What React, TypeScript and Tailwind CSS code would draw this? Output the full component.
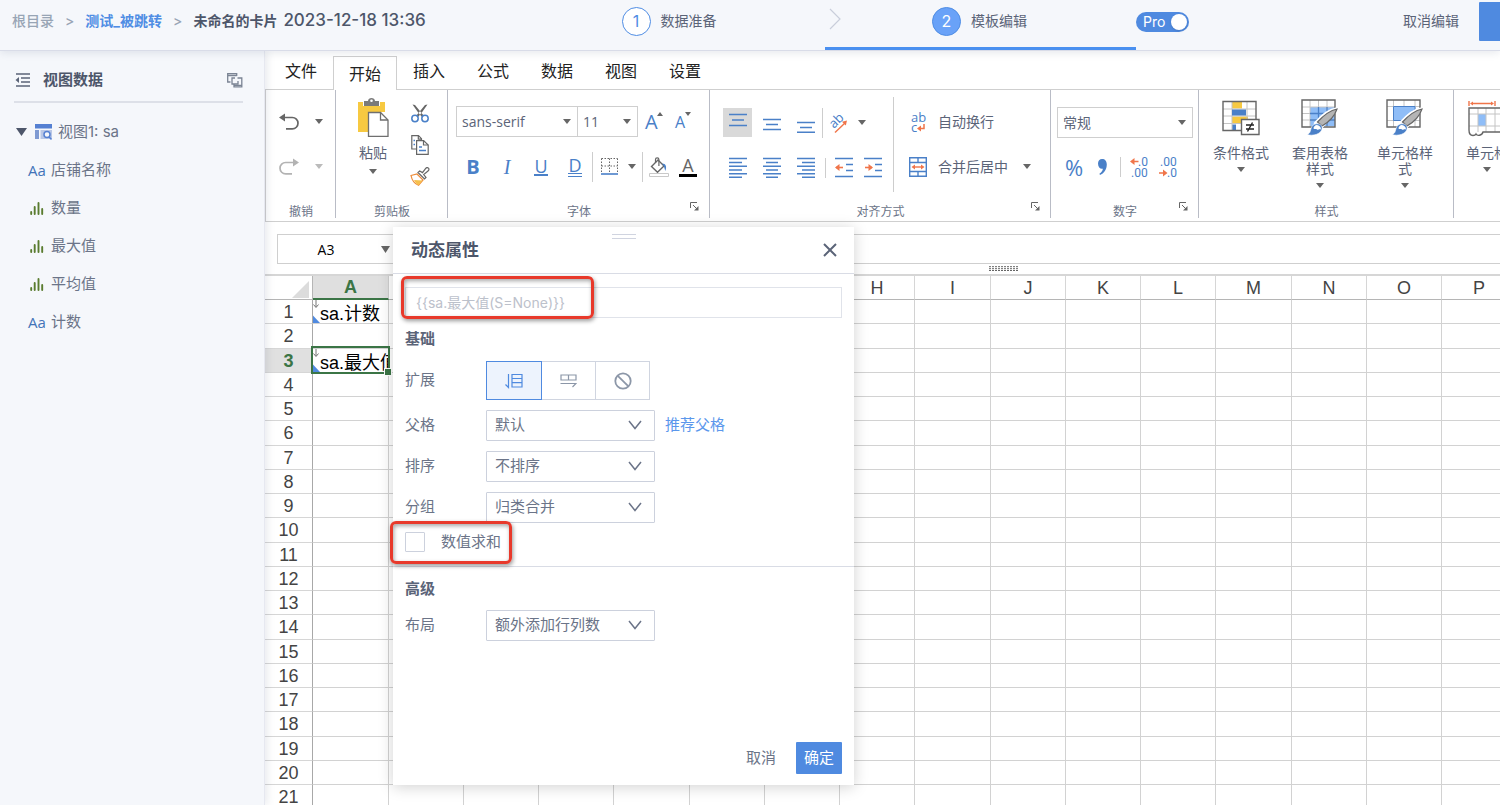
import { useState } from "react";
import type { ReactNode } from "react";

const BLUE = "#4a80c8";
const ORANGE = "#f0754a";
const GRAY = "#666666";

const fields = [
  { kind: "text", name: "店铺名称" },
  { kind: "number", name: "数量" },
  { kind: "number", name: "最大值" },
  { kind: "number", name: "平均值" },
  { kind: "text", name: "计数" },
];

const tabs = ["文件", "开始", "插入", "公式", "数据", "视图", "设置"];
const columns = "ABCDEFGHIJKLMNOP".split("");
const rows = Array.from({ length: 21 }, (_, i) => i + 1);

/* ---------- small shared pieces ---------- */

function Caret({ light = false }: { light?: boolean }) {
  return (
    <svg width="8" height="5" viewBox="0 0 8 5" className="shrink-0">
      <path d="M0 0h8L4 5z" fill={light ? "#bbbbbb" : GRAY} />
    </svg>
  );
}

function Launcher() {
  return (
    <button type="button" aria-label="更多设置" className="absolute right-[11px] bottom-2.5">
      <svg width="9" height="9" viewBox="0 0 9 9" fill="none" stroke={GRAY}>
        <path d="M.5 6V.5H7" />
        <path d="M3 3l4 4" />
        <path d="M8.5 4v4.5H4z" fill={GRAY} stroke="none" />
      </svg>
    </button>
  );
}

function Group({ label, className, launcher, children }: { label: string; className: string; launcher?: boolean; children: ReactNode }) {
  return (
    <section className={`relative flex shrink-0 flex-col ${className}`}>
      {children}
      <div className="mt-auto h-[19px] text-center text-xs leading-5 text-[#6b7488]">{label}</div>
      {launcher && <Launcher />}
      <span className="absolute top-0 right-0 h-32 w-px bg-[#b9bcc6]" />
    </section>
  );
}

function RibbonSelect({ label, value, className }: { label: string; value: string; className: string }) {
  return (
    <div className={`relative h-[31px] shrink-0 ${className}`}>
      <select
        aria-label={label}
        className="h-full w-full appearance-none border border-[#cfcfcf] bg-white pl-[5px] font-['Open_Sans','Noto_Sans_CJK_SC',sans-serif] text-sm text-[#5b6478] outline-none"
      >
        <option>{value}</option>
      </select>
      <span className="pointer-events-none absolute top-[13px] right-[7px]">
        <Caret />
      </span>
    </div>
  );
}

function Sep() {
  return <span className="h-[30px] w-px shrink-0 bg-[#cdcdcd]" />;
}

/* ---------- ribbon icons ---------- */

function UndoIcon({ color }: { color: string }) {
  return (
    <svg width="20" height="17" viewBox="0 0 20 17" fill="none" stroke={color} strokeWidth="1.7">
      <path d="M4 4.5h9.3a5.7 5.7 0 0 1 0 11.4H7" />
      <path d="M0 4.5L6 .5v8z" fill={color} stroke="none" />
    </svg>
  );
}

function PasteIcon() {
  return (
    <svg width="31" height="39" viewBox="0 0 31 39">
      <path d="M0 4h27v10H10v20H0z" fill="#f7c941" />
      <path d="M5 4h17v4H5z" fill="#fff" />
      <path d="M6 3h4c0-4 7-4 7 0h4v5H6z" fill="#7b7b7b" />
      <circle cx="13.5" cy="2.8" r="1.3" fill="#fff" />
      <path d="M10.5 14.5h12l7.5 7.5v16.5H10.500z" fill="#fff" stroke="#6f6f6f" strokeWidth="1.3" />
      <path d="M22.5 14.5V22H30" fill="none" stroke="#6f6f6f" strokeWidth="1.3" />
    </svg>
  );
}

function CutIcon() {
  return (
    <svg width="18" height="19" viewBox="0 0 18 19" fill="none">
      <path d="M1.500.5l2.500.5 9 11-2 1L7.500 9zM16.500.5L14 1 5 12l2 1 3.500-4z" fill={GRAY} />
      <circle cx="4" cy="14.5" r="3.2" stroke={BLUE} strokeWidth="1.5" />
      <circle cx="14" cy="14.5" r="3.2" stroke={BLUE} strokeWidth="1.5" />
    </svg>
  );
}

function CopyIcon() {
  return (
    <svg width="18" height="20" viewBox="0 0 18 20" fill="none" stroke={GRAY} strokeWidth="1.2">
      <path d="M5 14H.8V.7h6.700l3 3V5M7.300.7v3.500H10" />
      <path d="M5.600 5.600h7L17.200 10v9.300H5.600z" fill="#fff" />
      <path d="M12.500 5.600V10h4.700" />
      <path d="M2.500 5.500h1.500M2.500 9.500h1.500M8 12h3M8 15.500h7" stroke={BLUE} strokeWidth="1.4" />
    </svg>
  );
}

function FormatBrushIcon() {
  return (
    <svg width="20" height="19" viewBox="0 0 20 19" fill="none">
      <path d="M1 8.500l6-1.500 6 6-4.500 5.300C5 17 2 13.500 1 8.500z" fill="#fff" stroke="#ed8b39" strokeWidth="1.2" />
      <path d="M4 13l8.500.5-4 4.800C7 17.500 5 15.500 4 13z" fill="#f6c04c" />
      <path d="M8 5.500l6.500 6.500 1.500-1.500-2.300-3L18 4c1.500-1.200 1-2.500.3-3-.8-.6-1.800-.5-2.600.4L12.500 5.600 9.700 4z" fill="#fff" stroke={GRAY} strokeWidth="1.2" />
    </svg>
  );
}

function LetterIcon({ small = false }: { small?: boolean }) {
  return (
    <span className="relative flex h-5 w-5 items-end font-['Open_Sans',sans-serif] text-[#4a80c8]">
      <span className={small ? "text-base leading-5" : "text-xl leading-5"}>A</span>
      <svg width="6" height="4" viewBox="0 0 6 4" className={small ? "absolute top-0 right-1" : "absolute top-0 right-0.5"}>
        <path d={small ? "M0 0h6L3 4z" : "M0 4h6L3 0z"} fill={GRAY} />
      </svg>
    </span>
  );
}

function BorderIcon() {
  return (
    <svg width="17" height="17" viewBox="0 0 17 17" fill="none">
      <path d="M.5.5h16M.5 8h16M.5.5v14M8.500.5v14M16.500.5v14" stroke={GRAY} strokeDasharray="1.5 1.5" />
      <path d="M0 16h17" stroke={BLUE} strokeWidth="1.6" />
    </svg>
  );
}

function FillIcon() {
  return (
    <svg width="20" height="20" viewBox="0 0 20 20" fill="none">
      <path d="M2.500 9.500L9 3l6 6-6.500 6.300z" fill="#fff" stroke={GRAY} strokeWidth="1.4" />
      <path d="M6.500 6V2.500a1.700 1.700 0 0 1 3.400 0V9" stroke={GRAY} strokeWidth="1.2" />
      <path d="M13 6.500c4 0 5 3.500 3.300 7.500L14.800 9z" fill={BLUE} />
      <path d="M.5 16.500h19v3H.5z" fill="#fff" stroke="#c9c9c9" />
    </svg>
  );
}

function LinesIcon({ d }: { d: string }) {
  return (
    <svg width="18" height="21" viewBox="0 0 18 21" fill="none" stroke={BLUE} strokeWidth="1.4">
      <path d={d} />
    </svg>
  );
}

function IndentIcon({ right = false }: { right?: boolean }) {
  return (
    <svg width="18" height="21" viewBox="0 0 18 21" fill="none">
      <path d="M0 1.500h18M11 7.500h7M11 13.500h7M0 19.500h18" stroke={BLUE} strokeWidth="1.4" />
      <path d="M1 10.500h7" stroke={ORANGE} strokeWidth="1.6" />
      <path d={right ? "M9 10.500L4.500 7v7z" : "M0 10.500L4.500 7v7z"} fill={ORANGE} />
    </svg>
  );
}

function RotateTextIcon() {
  return (
    <svg width="19" height="20" viewBox="0 0 19 20" fill="none" className="overflow-visible">
      <text x="5" y="16" transform="rotate(-45 5 16)" fontFamily="Open Sans" fontSize="13" fill={BLUE}>
        ab
      </text>
      <path d="M6 19.500L16 10" stroke={ORANGE} strokeWidth="1.4" />
      <path d="M18 7.500l-5 1.300 3.800 3.700z" fill={ORANGE} />
    </svg>
  );
}

function WrapIcon() {
  return (
    <span className="relative flex w-[18px] flex-col pl-0.5 text-left font-['Open_Sans',sans-serif] text-[13px] leading-[10px] text-[#4a80c8]">
      <span>ab</span>
      <span>c</span>
      <svg width="8" height="8" viewBox="0 0 8 8" fill="none" className="absolute right-0.5 bottom-0">
        <path d="M7 0v4.500H3" stroke={ORANGE} strokeWidth="1.5" />
        <path d="M0 4.500l4-3v6z" fill={ORANGE} />
      </svg>
    </span>
  );
}

function MergeIcon() {
  return (
    <svg width="18" height="20" viewBox="0 0 18 20" fill="none">
      <path d="M.7.7h16.600v18.600H.7zM.7 5.500h16.600M.7 14.500h16.600M9 .7v4.800M9 14.500v4.800" stroke={BLUE} strokeWidth="1.4" />
      <path d="M5 10h8" stroke={ORANGE} strokeWidth="1.4" />
      <path d="M2.500 10L6 7.500v5zM15.500 10L12 7.500v5z" fill={ORANGE} />
    </svg>
  );
}

function DecimalIcon({ less = false }: { less?: boolean }) {
  return (
    <svg width="20" height="21" viewBox="0 0 20 21" fontFamily="Roboto" fontSize="12" fill={BLUE} className="overflow-visible">
      {less ? (
        <>
          <text x="1" y="9">.00</text>
          <text x="8" y="20">.0</text>
          <path d="M0 15.300h4V12.500l4.500 3.500L4 19.500v-2.700H0z" fill={ORANGE} />
        </>
      ) : (
        <>
          <text x="8" y="9">.0</text>
          <text x="1" y="20">.00</text>
          <path d="M8.500 3.700H4.500V1L0 4.500 4.500 8V5.200h4z" fill={ORANGE} />
        </>
      )}
    </svg>
  );
}

function BrushOverlay() {
  return (
    <>
      <path d="M36 10l-16 18-5-4C21 17 29 11 36 10z" fill="#b5b5b5" stroke="#fff" strokeWidth="3.500" />
      <path d="M36 10c-2 6-8 13-15 17l-4.500-4C22 17 29 11.500 36 10z" fill="#b5b5b5" stroke={GRAY} strokeWidth="1.2" />
      <path d="M14.500 25c4-1 7.500 1.500 6.500 5-1 5-9 7.500-15 5.500 4-1.500 3-4 4.500-7 .6-2 2-3 4-3.500z" fill={BLUE} stroke="#fff" strokeWidth=".6" />
      <path d="M15 26c3 0 5 1.500 5 4.500-2-1-3 1-4 0s-2.500 0-3.500-1c0-1.500 1-2.500 2.500-3.500z" fill="#fff" />
    </>
  );
}

function ConditionalIcon() {
  return (
    <svg width="38" height="38" viewBox="0 0 38 38" fill="none">
      <path d="M1 2.500h33v29H1z" fill="#fff" />
      <path d="M10 2.500h10v7H10zM10 17.500h16v7H10z" fill="#f7c941" />
      <path d="M10 25.500h4v6h-4z" fill={BLUE} />
      <path d="M1 10h33M1 17h33M1 24.500h33M10 2v29.500M25 2v29.500" stroke="#c4c4c4" />
      <path d="M1 2.500h33v29H1z" stroke={GRAY} strokeWidth="1.4" />
      <path d="M10 10.500h14v6H10z" fill={BLUE} />
      <path d="M19.500 20.500H37v15H19.500z" fill="#fff" stroke={GRAY} strokeWidth="1.4" />
      <path d="M24 26h8M24 30h8M30.500 23.500l-5 9" stroke="#222" strokeWidth="1.4" />
    </svg>
  );
}

function TableStyleIcon() {
  return (
    <svg width="38" height="38" viewBox="0 0 38 38" fill="none">
      <path d="M9 8h25v19H9z" fill="#8fbdf7" />
      <path d="M9 1v27M17.500 1v27M26 1v27M1 8h33M1 14.500h33M1 21h33" stroke="#c4c4c4" />
      <path d="M17.500 8v19M26 8v19M9 14.500h25M9 21h25" stroke={BLUE} strokeWidth="1.3" />
      <path d="M1 1h33v27H1z" stroke={GRAY} strokeWidth="1.4" />
      <BrushOverlay />
    </svg>
  );
}

function CellStyleIcon() {
  return (
    <svg width="38" height="38" viewBox="0 0 38 38" fill="none">
      <path d="M7.500 1v27M29 1v27M18 1v27M1 7.500h33M1 21.500h33" stroke="#c4c4c4" />
      <path d="M7.500 7.500H29v14H7.500z" fill="#8fbdf7" stroke={BLUE} />
      <path d="M1 1h33v27H1z" stroke={GRAY} strokeWidth="1.4" />
      <BrushOverlay />
    </svg>
  );
}

function CellSizeIcon() {
  return (
    <svg width="38" height="38" viewBox="0 0 38 38" fill="none">
      <path d="M1 2v5M27 2v5M4 4.500h20" stroke={ORANGE} strokeWidth="1.4" />
      <path d="M2 4.500l3-2v4zM26 4.500l-3-2v4z" fill={ORANGE} />
      <path d="M10 15h8v12h-8z" fill="#8fbdf7" />
      <path d="M10 9v24M18 9v24M27 9v24M1 15h36M1 27h36" stroke="#c4c4c4" />
      <path d="M37 9H1v22c0 4 2 5.500 4 5.500 1.500 0 2.500-.5 3-1.500 1 2 6 2 7-2h22" stroke={GRAY} strokeWidth="1.4" />
    </svg>
  );
}

function BigButton({ icon, lines, className }: { icon: ReactNode; lines: string[]; className: string }) {
  return (
    <button type="button" className={`flex shrink-0 flex-col items-center pt-[9px] ${className}`}>
      {icon}
      <span className="mt-2 flex flex-col text-sm leading-4 whitespace-nowrap text-[#5b6478]">
        {lines.map((line) => (
          <span key={line}>{line}</span>
        ))}
      </span>
      <span className="mt-1.5">
        <Caret />
      </span>
    </button>
  );
}

/* ---------- page sections ---------- */

function TopBar() {
  const [pro, setPro] = useState(true);

  return (
    <header className="relative z-20 flex h-[51px] shrink-0 border-b border-[#d9dce8] bg-[#f5f7fb] text-sm text-[#5b6478] shadow-[0_2px_8px_rgba(60,70,110,0.12)]">
      <nav className="flex h-[41px] w-[515px] shrink-0 items-center gap-[11px] pl-3 font-medium whitespace-nowrap">
        <a href="#root" className="text-[#98a5b5]">根目录</a>
        <span className="text-[#98a5b5]">&gt;</span>
        <a href="#parent" className="font-bold text-[#4f8de4]">测试_被跳转</a>
        <span className="text-[#98a5b5]">&gt;</span>
        <span className="flex items-center gap-1.5 font-bold text-[#4d566a]">
          <span>未命名的卡片</span>
          <span className="text-[17px] font-medium">2023-12-18 13:36</span>
        </span>
      </nav>
      <div className="flex h-[50px] w-[310px] shrink-0 items-center justify-center gap-2.5 pr-0.5 pb-2">
        <span className="flex h-[29px] w-[29px] items-center justify-center rounded-full border border-[#4f8de4] bg-white text-base text-[#4f8de4]">1</span>
        <span>数据准备</span>
      </div>
      <div className="relative flex h-[50px] w-[311px] shrink-0 items-center justify-center gap-2.5 border-b-3 border-[#4a90f0] pr-0.5 pb-[5px]">
        <svg width="12" height="22" viewBox="0 0 12 22" fill="none" className="absolute top-2 left-1">
          <path d="M1 1l10 10L1 21" stroke="#c9cedb" strokeWidth="1.2" />
        </svg>
        <span className="flex h-[29px] w-[29px] items-center justify-center rounded-full border border-[#4f8de4] bg-[#69a2f8] text-base text-white">2</span>
        <span>模板编辑</span>
      </div>
      <button
        type="button"
        role="switch"
        aria-checked={pro}
        onClick={() => setPro(!pro)}
        className="mt-3 flex h-5 w-[53px] shrink-0 items-center justify-between rounded-full bg-[#4f8ae0] pr-0.5 pl-[7px] text-sm text-white"
      >
        Pro
        <span className="h-4 w-4 rounded-full bg-white shadow" />
      </button>
      <div className="ml-auto flex h-[41px] shrink-0 items-center">
        <button type="button">取消编辑</button>
        <button type="button" aria-label="保存" className="mt-0.5 ml-5 h-[39px] w-[21px] self-start rounded-l-[1px] bg-[#4f8ae0]" />
      </div>
    </header>
  );
}

function Sidebar() {
  return (
    <aside className="z-10 w-[265px] shrink-0 border-r border-[#e6e8f0] bg-[#f5f7fb] text-[15px] text-[#6b7488] shadow-[2px_0_8px_rgba(60,70,110,0.12)]">
      <div className="mr-[21px] ml-3.5 flex h-[52px] items-center border-b-2 border-[#dde0e8] pt-2">
        <button type="button" aria-label="收起">
          <svg width="16" height="14" viewBox="0 0 16 14" fill="none" stroke="#5b6478" strokeWidth="1.5">
            <path d="M2 1h14M7 5h9M7 9h9M2 13h14" />
            <path d="M5 4v6L1.500 7z" fill="#5b6478" stroke="none" />
          </svg>
        </button>
        <h2 className="ml-[13px] font-bold text-[#4d566a]">视图数据</h2>
        <button type="button" aria-label="切换视图" className="ml-auto">
          <svg width="16" height="15" viewBox="0 0 16 15" fill="none" stroke="#7b8494" strokeWidth="1.3">
            <path d="M3.500 9H.7V.7h9V3M.7 2.500h9" />
            <path d="M8 5H5v6h6V8" />
            <path d="M10.500 5h4.300v8.800H7V11M7 12.300h7.800" />
          </svg>
        </button>
      </div>
      <div className="mt-[10px] flex h-[38px] items-center pl-4">
        <svg width="11" height="8" viewBox="0 0 11 8">
          <path d="M0 0h11L5.500 8z" fill="#4d566a" />
        </svg>
        <svg width="17" height="16" viewBox="0 0 17 16" className="ml-2">
          <path d="M0 0h17v4.500H0z" fill="#5580d2" />
          <path d="M0 6h4v9H0z" fill="#7f9ad2" />
          <path d="M5.500 6H17v9H5.500z" fill="#b9c7e6" />
          <circle cx="12" cy="10.5" r="3" fill="#f5f7fb" stroke="#5580d2" strokeWidth="1.5" />
          <path d="M14 12.700l2.500 2.800" stroke="#5580d2" strokeWidth="1.5" />
        </svg>
        <span className="ml-1.5">视图1: sa</span>
      </div>
      <ul>
        {fields.map((field) => (
          <li key={field.name} className="flex h-[38px] items-center pl-7">
            <span className="flex w-[23px] shrink-0 items-center font-['Open_Sans',sans-serif] text-[#4273b8]">
              {field.kind === "text" ? (
                "Aa"
              ) : (
                <svg width="14" height="13" viewBox="0 0 14 13" stroke="#5a7c2f" strokeWidth="1.9" strokeLinecap="round" className="ml-0.5">
                  <path d="M1.200 10v2M4.700 5v7M8.500 1v11M12.200 7v5" />
                </svg>
              )}
            </span>
            <span>{field.name}</span>
          </li>
        ))}
      </ul>
    </aside>
  );
}

function Ribbon() {
  const small = "flex h-[29px] w-[29px] shrink-0 items-center justify-center";
  const style = "flex h-[34px] w-[34px] shrink-0 items-center justify-center text-[#4a80c8]";

  return (
    <div>
      <div role="tablist" className="flex h-[39px] items-end border-b border-[#cfcfcf] pl-1">
        {tabs.map((tab) => (
          <button
            key={tab}
            type="button"
            role="tab"
            aria-selected={tab === "开始"}
            className={
              tab === "开始"
                ? "-mb-px h-[34px] w-16 border border-b-0 border-[#cfcfcf] bg-white text-base text-[#222]"
                : "mb-px h-[34px] w-16 text-base text-[#222]"
            }
          >
            {tab}
          </button>
        ))}
      </div>
      <div className="flex h-[132px] overflow-hidden border-b border-l border-[#cfcfcf]">
        <Group label="撤销" className="w-[70px] pt-[9px]">
          <div className="flex h-[45px] items-center gap-4 pl-[13px]">
            <button type="button" aria-label="撤销"><UndoIcon color={GRAY} /></button>
            <Caret />
          </div>
          <div className="flex h-[45px] items-center gap-4 pl-[13px]">
            <button type="button" aria-label="重做" className="-scale-x-100"><UndoIcon color="#b3b3b3" /></button>
            <Caret light />
          </div>
        </Group>

        <Group label="剪贴板" className="w-28">
          <div className="flex">
            <button type="button" className="flex w-[74px] flex-col items-center pt-2 text-sm text-[#5b6478]">
              <PasteIcon />
              <span className="mt-1.5">粘贴</span>
              <span className="mt-1.5"><Caret /></span>
            </button>
            <div className="flex flex-col items-center gap-3 pt-3.5">
              <button type="button" aria-label="剪切" className="flex"><CutIcon /></button>
              <button type="button" aria-label="复制" className="flex"><CopyIcon /></button>
              <button type="button" aria-label="格式刷" className="flex"><FormatBrushIcon /></button>
            </div>
          </div>
        </Group>

        <Group label="字体" className="w-[262px] pt-[9px]" launcher>
          <div className="flex h-[45px] items-center pl-2">
            <RibbonSelect label="字体" value="sans-serif" className="w-[122px]" />
            <RibbonSelect label="字号" value="11" className="-ml-px w-[61px]" />
            <button type="button" aria-label="增大字号" className="ml-[7px]"><LetterIcon /></button>
            <button type="button" aria-label="减小字号" className="ml-2.5"><LetterIcon small /></button>
          </div>
          <div className="flex h-[45px] items-center pl-2 font-['Open_Sans',sans-serif] text-lg">
            <button type="button" className={`${style} text-xl font-bold`}>B</button>
            <button type="button" className={`${style} font-['Liberation_Serif',serif] text-xl italic`}>I</button>
            <button type="button" className={style}>
              <span className="border-b-2 border-[#4a80c8] leading-4">U</span>
            </button>
            <button type="button" className={style}>
              <span className="border-b-4 border-double border-[#4a80c8] leading-4">D</span>
            </button>
            <Sep />
            <button type="button" aria-label="边框" className="ml-2"><BorderIcon /></button>
            <span className="ml-[10px] flex"><Caret /></span>
            <span className="ml-1.5 flex"><Sep /></span>
            <button type="button" aria-label="填充颜色" className="ml-1.5"><FillIcon /></button>
            <button type="button" className="ml-2.5 w-[18px] border-b-3 border-black leading-[18px] text-[#666]">A</button>
          </div>
        </Group>

        <Group label="对齐方式" className="w-[341px]" launcher>
          <div className="flex">
            <div className="w-[183px] pt-2.5">
              <div className="flex h-[45px] items-center pl-[13px]">
                <button type="button" aria-label="顶端对齐" className={`${small} bg-[#d9d9d9]`}>
                  <LinesIcon d="M0 2.500h18M3 8h12M0 13.500h18" />
                </button>
                <button type="button" aria-label="垂直居中" className={`${small} ml-[5px]`}>
                  <LinesIcon d="M0 7.500h18M3 12.500h12M0 17.500h18" />
                </button>
                <button type="button" aria-label="底端对齐" className={`${small} ml-[5px]`}>
                  <LinesIcon d="M0 10.500h18M3 15.500h12M0 20.300h18" />
                </button>
                <span className="ml-0.5 flex"><Sep /></span>
                <button type="button" aria-label="方向" className="ml-1.5"><RotateTextIcon /></button>
                <span className="ml-2.5"><Caret /></span>
              </div>
              <div className="flex h-[45px] items-center pl-[13px]">
                <button type="button" aria-label="左对齐" className={small}>
                  <LinesIcon d="M0 1.500h18M0 5.500h13M0 9.200h18M0 13h13M0 16.700h18M0 20.300h13" />
                </button>
                <button type="button" aria-label="居中" className={`${small} ml-[5px]`}>
                  <LinesIcon d="M0 1.500h18M3 5.500h12M0 9.200h18M3 13h12M0 16.700h18M3 20.300h12" />
                </button>
                <button type="button" aria-label="右对齐" className={`${small} ml-[5px]`}>
                  <LinesIcon d="M0 1.500h18M5 5.500h13M0 9.200h18M5 13h13M0 16.700h18M5 20.300h13" />
                </button>
                <span className="ml-[5px] flex h-5 w-px bg-[#cdcdcd]" />
                <button type="button" aria-label="减少缩进" className="ml-[9px]"><IndentIcon /></button>
                <button type="button" aria-label="增加缩进" className="ml-[11px]"><IndentIcon right /></button>
              </div>
            </div>
            <span className="mt-[7px] h-[95px] w-px bg-[#cdcdcd]" />
            <div className="pt-[9px] pl-[15px] text-sm text-[#5b6478]">
              <button type="button" className="flex h-[45px] items-center gap-[11px]">
                <WrapIcon />
                自动换行
              </button>
              <button type="button" className="flex h-[45px] items-center gap-[11px]">
                <MergeIcon />
                合并后居中
                <span className="ml-1"><Caret /></span>
              </button>
            </div>
          </div>
        </Group>

        <Group label="数字" className="w-[148px] pt-2.5" launcher>
          <div className="flex h-[45px] items-center pl-1.5">
            <RibbonSelect label="数字格式" value="常规" className="w-[136px]" />
          </div>
          <div className="flex h-11 items-center pl-[13px] text-[#4a80c8]">
            <button type="button" className="w-5 font-['Open_Sans',sans-serif] text-[22px]">%</button>
            <button type="button" aria-label="千位分隔" className="ml-3.5">
              <svg width="9" height="16" viewBox="0 0 9 16">
                <path d="M4 0c3 0 4.800 2 4.800 5.500C8.800 10.500 6 14.500 2 16l-.6-1.300c2-1.400 3.200-3 3.500-5C2.500 10.300 0 8.500 0 4.600 0 2 1.700 0 4 0z" fill={BLUE} />
              </svg>
            </button>
            <span className="ml-[13px] flex h-5 w-px bg-[#cdcdcd]" />
            <button type="button" aria-label="增加小数位" className="ml-[9px]"><DecimalIcon /></button>
            <button type="button" aria-label="减少小数位" className="ml-[9px]"><DecimalIcon less /></button>
          </div>
        </Group>

        <Group label="样式" className="w-[255px]">
          <div className="flex pl-[9px]">
            <BigButton icon={<ConditionalIcon />} lines={["条件格式"]} className="w-[66px]" />
            <BigButton icon={<TableStyleIcon />} lines={["套用表格", "样式"]} className="ml-[13px] w-[66px]" />
            <BigButton icon={<CellStyleIcon />} lines={["单元格样", "式"]} className="ml-[19px] w-[66px]" />
          </div>
        </Group>

        <div className="shrink-0 pl-2.5">
          <BigButton icon={<CellSizeIcon />} lines={["单元格"]} className="w-[46px]" />
        </div>
      </div>
    </div>
  );
}

function FormulaBar() {
  return (
    <div className="h-[54px] border-b-2 border-[#d6d6d6] pt-3">
      <div className="ml-3 flex h-[30px] border-y border-l border-[#cfcfcf]">
        <div className="relative w-[121px] shrink-0 border-r border-[#cfcfcf]">
          <input
            aria-label="名称框"
            defaultValue="A3"
            className="h-full w-full pr-6 text-center font-['Open_Sans',sans-serif] text-sm text-black outline-none"
          />
          <svg width="9" height="7" viewBox="0 0 9 7" className="absolute top-[11px] right-2">
            <path d="M0 0h9L4.500 7z" fill={GRAY} />
          </svg>
        </div>
        <input aria-label="编辑栏" className="min-w-0 flex-1 outline-none" />
      </div>
      <svg width="29" height="5" viewBox="0 0 29 5" className="mt-0.5 ml-[724px]">
        <path d="M0 .7h29M0 2.700h29M0 4.500h29" stroke="#666" strokeWidth="1" strokeDasharray="2 1" />
      </svg>
    </div>
  );
}

function CellContent({ text, selected }: { text: string; selected: boolean }) {
  return (
    <>
      <div className="relative flex h-[23px] w-[75px] overflow-hidden pt-1 pl-[7px] text-lg leading-[21px] whitespace-nowrap text-black">
        {text}
        <svg width="7" height="23" viewBox="0 0 7 23" className="absolute top-0 left-0">
          <path d="M3 0v7M.5 4.500L3 7.500l2.500-3" stroke="#777" fill="none" />
          <path d="M0 15.500L7 23H0z" fill="#4f8ae0" />
        </svg>
      </div>
      {selected && (
        <span className="absolute -inset-0.5 -top-[3px] z-1 border-2 border-[#3b7546]">
          <span className="absolute -right-[3px] -bottom-[3px] h-1.5 w-1.5 bg-[#3b7546] ring-1 ring-white" />
        </span>
      )}
    </>
  );
}

function Sheet() {
  const values: Record<string, string> = { A1: "sa.计数", A3: "sa.最大值" };

  return (
    <div className="min-h-0 flex-1 overflow-hidden">
      <table className="border-separate border-spacing-0 font-['Liberation_Sans','Noto_Sans_CJK_SC',sans-serif] text-lg text-[#444]">
        <thead>
          <tr>
            <th className="h-6 border-r border-b border-[#b5b5b5] p-0">
              <svg width="47" height="20" viewBox="0 0 47 20">
                <path d="M44 3v17H27z" fill="#dcdcdc" />
              </svg>
            </th>
            {columns.map((col, i) => (
              <th
                key={col}
                className={
                  col === "A"
                    ? "h-6 border-r border-b-2 border-r-[#cfcfcf] border-b-[#3b7546] bg-[#dfdfdf] p-0 leading-5 font-bold text-[#3b7546]"
                    : "h-6 border-r border-b border-r-[#d6d6d6] border-b-[#b5b5b5] p-0 leading-5 font-normal"
                }
              >
                <div className={i % 4 === 0 ? "w-[75px]" : "w-[74px]"}>{col}</div>
              </th>
            ))}
          </tr>
        </thead>
        <tbody>
          {rows.map((row) => (
            <tr key={row} className={row % 4 === 2 ? "h-[25px]" : "h-6"}>
              <th
                className={
                  row === 3
                    ? "border-r border-b border-r-[#3b7546] border-b-[#d6d6d6] bg-[#e0e0e0] p-0 leading-5 font-bold text-[#3b7546]"
                    : "border-r border-b border-r-[#a8a8a8] border-b-[#d6d6d6] p-0 leading-5 font-normal"
                }
              >
                {row}
              </th>
              {columns.map((col) => (
                <td key={col} className="relative border-r border-b border-[#d2d2d2] p-0">
                  {values[col + row] && <CellContent text={values[col + row]} selected={row === 3} />}
                </td>
              ))}
            </tr>
          ))}
        </tbody>
      </table>
    </div>
  );
}

function PanelSelect({ id, label, options, children }: { id: string; label: string; options: string[]; children?: ReactNode }) {
  return (
    <div className="flex h-[31px] items-center">
      <label htmlFor={id} className="w-[81px] shrink-0">{label}</label>
      <div className="relative h-full w-[169px]">
        <select id={id} className="h-full w-full appearance-none rounded-[1px] border border-[#ccd1dd] bg-white pl-2 text-[#6b7488] outline-none">
          {options.map((option) => (
            <option key={option}>{option}</option>
          ))}
        </select>
        <svg width="14" height="10" viewBox="0 0 14 10" fill="none" className="pointer-events-none absolute top-2.5 right-[13px]">
          <path d="M1 1l6 7.500L13 1" stroke="#6b7488" strokeWidth="1.5" />
        </svg>
      </div>
      {children}
    </div>
  );
}

function PropertyPanel() {
  const [expand, setExpand] = useState(0);
  const [sum, setSum] = useState(false);

  const expandIcons = [
    <svg key="down" width="18" height="16" viewBox="0 0 18 16" fill="none" stroke="currentColor" strokeWidth="1.2">
      <path d="M3.500 1v13.500L.5 11.500" />
      <path d="M7 1.500h10v12.500H7zM7 5.500h10M7 9.700h10" />
    </svg>,
    <svg key="right" width="17" height="14" viewBox="0 0 17 14" fill="none" stroke="currentColor" strokeWidth="1.2">
      <path d="M1 1h15v5H1zM8.500 1v5M.5 9.500H16L12.500 13" />
    </svg>,
    <svg key="none" width="18" height="18" viewBox="0 0 18 18" fill="none" stroke="currentColor" strokeWidth="1.8">
      <circle cx="9" cy="9" r="7.7" />
      <path d="M3.800 3.800l10.400 10.400" />
    </svg>,
  ];

  return (
    <div
      role="dialog"
      aria-label="动态属性"
      className="absolute top-44 left-32 z-10 flex h-[558px] w-[461px] flex-col bg-white text-[15px] text-[#6b7488] shadow-[0_2px_14px_rgba(0,0,0,0.18)]"
    >
      <div className="relative flex h-[47px] shrink-0 items-center border-b border-[#d9dce5] pr-[17px] pl-[18px]">
        <span className="absolute top-[7px] left-1/2 h-[5px] w-6 -translate-x-1/2 border-y border-[#d0d4e0]" />
        <h2 className="pt-0.5 text-[17px] font-bold text-[#4d566a]">动态属性</h2>
        <button type="button" aria-label="关闭" className="ml-auto">
          <svg width="14" height="14" viewBox="0 0 14 14" stroke="#5b6478" strokeWidth="2">
            <path d="M1 1l12 12M13 1L1 13" />
          </svg>
        </button>
      </div>

      <div className="px-3 pt-[13px]">
        <div className="relative">
          <input
            aria-label="公式"
            placeholder="{{sa.最大值(S=None)}}"
            className="block h-[31px] w-full border border-[#e0e3ea] pl-2.5 text-sm outline-none placeholder:text-[#bcc1cb]"
          />
          <span className="pointer-events-none absolute -top-[11px] -left-1 h-[43px] w-[193px] rounded-md border-3 border-[#e8392b] shadow-[1px_2px_4px_rgba(0,0,0,0.4),inset_1px_2px_4px_rgba(0,0,0,0.35)]" />
        </div>
        <h3 className="mt-[11px] h-5 leading-5 font-bold text-[#5b6478]">基础</h3>
        <div className="mt-3 flex flex-col gap-2.5">
          <div className="flex h-[39px] items-center">
            <span className="w-[81px] shrink-0">扩展</span>
            <div className="flex h-full text-[#8c97a8]">
              {expandIcons.map((icon, i) => (
                <button
                  key={i}
                  type="button"
                  aria-label={["向下扩展", "向右扩展", "不扩展"][i]}
                  onClick={() => setExpand(i)}
                  className={
                    expand === i
                      ? "relative flex w-14 items-center justify-center border border-[#4f8ae0] bg-[#edf3fd] text-[#4f8ae0]"
                      : "-ml-px flex w-[55px] items-center justify-center border border-[#d0d5e0]"
                  }
                >
                  {icon}
                </button>
              ))}
            </div>
          </div>
          <PanelSelect id="parent" label="父格" options={["默认"]}>
            <a href="#recommend" className="ml-2.5 text-[#5b97ec]">推荐父格</a>
          </PanelSelect>
          <PanelSelect id="sort" label="排序" options={["不排序"]} />
          <PanelSelect id="group" label="分组" options={["归类合并"]} />
        </div>
        <label className="relative mt-[9px] flex h-5 w-fit items-center">
          <input
            type="checkbox"
            checked={sum}
            onChange={(e) => setSum(e.target.checked)}
            className="h-5 w-5 appearance-none rounded-[1px] border border-[#ccd1dd] bg-white checked:bg-[#4f8ae0]"
          />
          <span className="ml-4">数值求和</span>
          <span className="pointer-events-none absolute -top-[11px] -left-[15px] h-[43px] w-[122px] rounded-md border-3 border-[#e8392b] shadow-[1px_2px_4px_rgba(0,0,0,0.4),inset_1px_2px_4px_rgba(0,0,0,0.35)]" />
        </label>
      </div>

      <div className="mt-3.5 border-t border-[#d9dce5] px-3 pt-3">
        <h3 className="mb-[11px] h-5 leading-5 font-bold text-[#5b6478]">高级</h3>
        <PanelSelect id="layout" label="布局" options={["额外添加行列数"]} />
      </div>

      <div className="mt-auto flex justify-end gap-5 px-3 pb-[11px]">
        <button type="button">取消</button>
        <button type="button" className="h-8 w-[46px] rounded-[1px] bg-[#4f8ae0] text-white">确定</button>
      </div>
    </div>
  );
}

export default function App() {
  return (
    <div className="flex h-screen flex-col overflow-hidden bg-white font-['Inter','Noto_Sans_CJK_SC',sans-serif]">
      <TopBar />
      <div className="flex min-h-0 flex-1">
        <Sidebar />
        <main className="relative flex min-w-0 flex-1 flex-col">
          <Ribbon />
          <FormulaBar />
          <Sheet />
          <PropertyPanel />
        </main>
      </div>
    </div>
  );
}
